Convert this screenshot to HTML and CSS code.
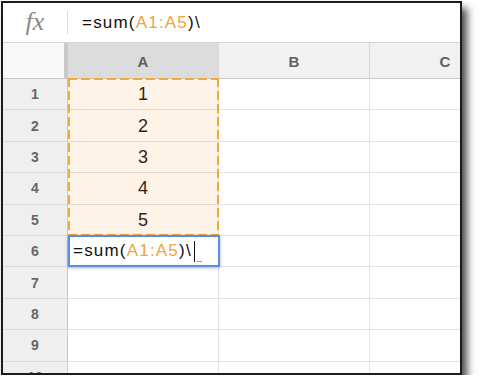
FILE: index.html
```html
<!DOCTYPE html>
<html>
<head>
<meta charset="utf-8">
<link rel="stylesheet" href="styles.css">
</head>
<body>
<div class="frame">
  <div class="fbar">
    <div class="fx">fx</div>
    <div class="sep"></div>
    <div class="ftext">=sum(<span class="ref">A1:A5</span>)\</div>
  </div>
  <div class="grid">
    <div class="corner"></div>
    <div class="ch sel">A</div>
    <div class="ch">B</div>
    <div class="ch">C</div>

    <div class="rh">1</div><div class="c num">1</div><div class="c"></div><div class="c"></div>
    <div class="rh">2</div><div class="c num">2</div><div class="c"></div><div class="c"></div>
    <div class="rh">3</div><div class="c num">3</div><div class="c"></div><div class="c"></div>
    <div class="rh">4</div><div class="c num">4</div><div class="c"></div><div class="c"></div>
    <div class="rh">5</div><div class="c num">5</div><div class="c"></div><div class="c"></div>
    <div class="rh">6</div><div class="c"></div><div class="c"></div><div class="c"></div>
    <div class="rh">7</div><div class="c"></div><div class="c"></div><div class="c"></div>
    <div class="rh">8</div><div class="c"></div><div class="c"></div><div class="c"></div>
    <div class="rh">9</div><div class="c"></div><div class="c"></div><div class="c"></div>
    <div class="rh last">10</div><div class="c"></div><div class="c"></div><div class="c"></div>

    <div class="range"></div>
    <div class="editor"><span class="etext">=sum(<span class="ref">A1:A5</span>)\</span><span class="caret"></span><span class="hint"></span></div>
  </div>
</div>
</body>
</html>
```
FILE: styles.css
```css
html, body {
  margin: 0;
  padding: 0;
  background: #ffffff;
}

body {
  font-family: "Liberation Sans", Arial, sans-serif;
}

.frame {
  margin: 1px 0 0 1px;
  width: 457px;
  height: 370px;
  border: 2px solid #1c1c1c;
  box-shadow: 5px 7px 8px 0 rgba(0, 0, 0, 0.72);
  overflow: hidden;
  background: #ffffff;
}

.fbar {
  height: 39px;
  border-bottom: 1px solid #d4d4d4;
  display: flex;
  align-items: center;
  background: #ffffff;
}

.fx {
  width: 64px;
  text-align: center;
  font-family: "Liberation Serif", "Times New Roman", serif;
  font-style: italic;
  font-size: 26px;
  color: #8a8a8a;
  line-height: 1;
  padding-bottom: 2px;
}

.sep {
  width: 1px;
  height: 23px;
  background: #dadada;
  margin-right: 14px;
}

.ftext {
  font-size: 17px;
  letter-spacing: 1.2px;
  color: #111111;
  padding-top: 1px;
}

.ref {
  color: #f0a43a;
}

.grid {
  position: relative;
  display: grid;
  grid-template-columns: 65px 151px 151px 151px;
  grid-template-rows: 36px repeat(10, 31.4px);
}

.corner {
  background: #f8f8f8;
  border-right: 4px solid #c9c9c9;
  border-bottom: 1px solid #c9c9c9;
  box-sizing: border-box;
}

.ch {
  background: #f1f1f1;
  border-right: 1px solid #d6d6d6;
  border-bottom: 1px solid #c9c9c9;
  box-sizing: border-box;
  display: flex;
  align-items: center;
  justify-content: center;
  font-size: 15px;
  font-weight: bold;
  color: #5f5f5f;
  padding-top: 2px;
}

.ch.sel {
  background: #dcdcdc;
}

.rh {
  background: #efefef;
  border-right: 1px solid #c9c9c9;
  border-bottom: 1px solid #dadada;
  box-sizing: border-box;
  display: flex;
  align-items: center;
  justify-content: center;
  font-size: 14px;
  font-weight: bold;
  color: #666666;
}

.c {
  border-right: 1px solid #e3e3e3;
  border-bottom: 1px solid #e3e3e3;
  box-sizing: border-box;
}

.c.num {
  display: flex;
  align-items: center;
  justify-content: center;
  font-size: 18px;
  color: #111111;
  padding-top: 1px;
}

.range {
  position: absolute;
  grid-column: 2 / 3;
  grid-row: 2 / 7;
  inset: -1px 0 0 0;
  background-color: rgba(250, 165, 70, 0.13);
  background-image:
    repeating-linear-gradient(90deg, #f1a93c 0 9px, transparent 9px 13px),
    repeating-linear-gradient(90deg, #f1a93c 0 9px, transparent 9px 13px),
    repeating-linear-gradient(180deg, #f1a93c 0 9px, transparent 9px 13px),
    repeating-linear-gradient(180deg, #f1a93c 0 9px, transparent 9px 13px);
  background-size: 100% 2px, 100% 2px, 2px 100%, 2px 100%;
  background-position: left top, left bottom, left top, right top;
  background-repeat: no-repeat;
}

.editor {
  position: absolute;
  grid-column: 2 / 3;
  grid-row: 7 / 8;
  inset: -1px -1px 0 0;
  border: 2px solid #5a8de4;
  box-shadow: 0 1px 3px rgba(0, 0, 0, 0.3);
  background: #ffffff;
  display: flex;
  align-items: center;
  padding-left: 3px;
}

.etext {
  font-size: 17px;
  letter-spacing: 1.2px;
  color: #111111;
}

.caret {
  width: 1px;
  height: 21px;
  background: #111111;
  margin-left: 2px;
}

.hint {
  width: 5px;
  height: 1px;
  background: #9a9a9a;
  margin-left: 2px;
  margin-top: 20px;
}
```
